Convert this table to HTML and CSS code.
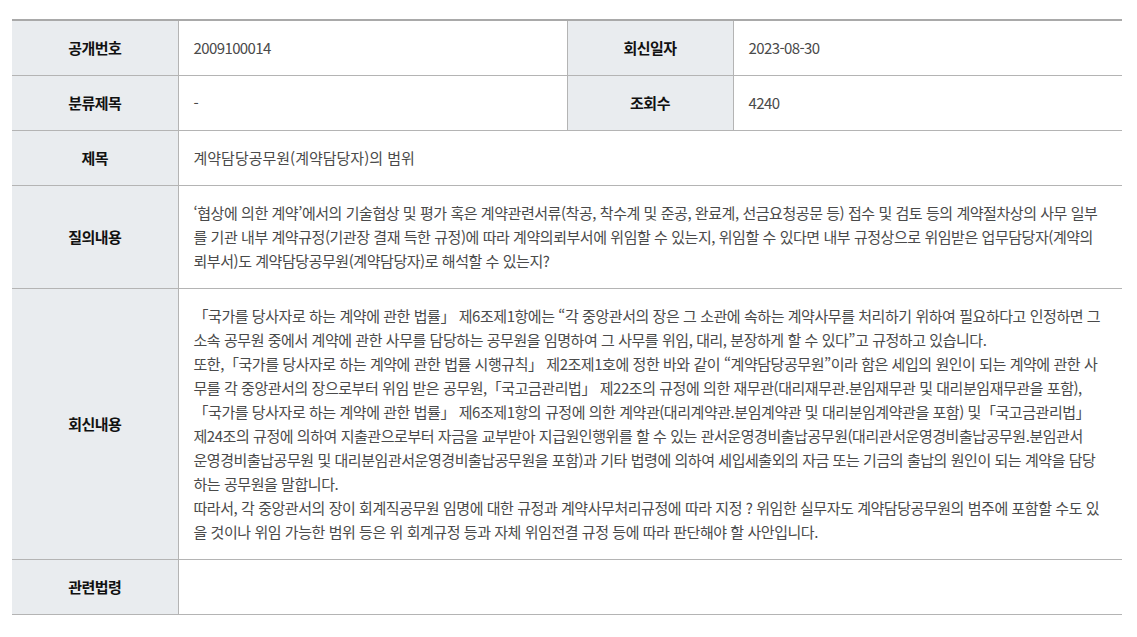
FILE: index.html
```html
<!DOCTYPE html>
<html lang="ko">
<head>
<meta charset="utf-8">
<link rel="stylesheet" href="styles.css">
</head>
<body>
<div class="wrap">
<table class="view">
  <colgroup>
    <col class="c-th"><col class="c-td"><col class="c-th"><col class="c-td">
  </colgroup>
  <tr class="r-short">
    <th>공개번호</th><td class="num">2009100014</td>
    <th>회신일자</th><td class="num">2023-08-30</td>
  </tr>
  <tr class="r-short">
    <th>분류제목</th><td>-</td>
    <th>조회수</th><td class="num">4240</td>
  </tr>
  <tr class="r-short">
    <th>제목</th><td colspan="3">계약담당공무원(계약담당자)의 범위</td>
  </tr>
  <tr>
    <th>질의내용</th>
    <td colspan="3" class="long">‘협상에 의한 계약’에서의 기술협상 및 평가 혹은 계약관련서류(착공, 착수계 및 준공, 완료계, 선금요청공문 등) 접수 및 검토 등의 계약절차상의 사무 일부<br>를 기관 내부 계약규정(기관장 결재 득한 규정)에 따라 계약의뢰부서에 위임할 수 있는지, 위임할 수 있다면 내부 규정상으로 위임받은 업무담당자(계약의<br>뢰부서)도 계약담당공무원(계약담당자)로 해석할 수 있는지?</td>
  </tr>
  <tr>
    <th>회신내용</th>
    <td colspan="3" class="long answer">「국가를 당사자로 하는 계약에 관한 법률」 제6조제1항에는 “각 중앙관서의 장은 그 소관에 속하는 계약사무를 처리하기 위하여 필요하다고 인정하면 그<br>소속 공무원 중에서 계약에 관한 사무를 담당하는 공무원을 임명하여 그 사무를 위임, 대리, 분장하게 할 수 있다”고 규정하고 있습니다.<br>또한,「국가를 당사자로 하는 계약에 관한 법률 시행규칙」 제2조제1호에 정한 바와 같이 “계약담당공무원”이라 함은 세입의 원인이 되는 계약에 관한 사<br>무를 각 중앙관서의 장으로부터 위임 받은 공무원,「국고금관리법」 제22조의 규정에 의한 재무관(대리재무관.분임재무관 및 대리분임재무관을 포함),<br>「국가를 당사자로 하는 계약에 관한 법률」 제6조제1항의 규정에 의한 계약관(대리계약관.분임계약관 및 대리분임계약관을 포함) 및「국고금관리법」<br>제24조의 규정에 의하여 지출관으로부터 자금을 교부받아 지급원인행위를 할 수 있는 관서운영경비출납공무원(대리관서운영경비출납공무원.분임관서<br>운영경비출납공무원 및 대리분임관서운영경비출납공무원을 포함)과 기타 법령에 의하여 세입세출외의 자금 또는 기금의 출납의 원인이 되는 계약을 담당<br>하는 공무원을 말합니다.<br>따라서, 각 중앙관서의 장이 회계직공무원 임명에 대한 규정과 계약사무처리규정에 따라 지정 ? 위임한 실무자도 계약담당공무원의 범주에 포함할 수도 있<br>을 것이나 위임 가능한 범위 등은 위 회계규정 등과 자체 위임전결 규정 등에 따라 판단해야 할 사안입니다.</td>
  </tr>
  <tr class="r-short">
    <th>관련법령</th><td colspan="3"></td>
  </tr>
</table>
</div>
</body>
</html>
```
FILE: styles.css
```css
html, body {
  margin: 0;
  padding: 0;
  background: #fff;
}
body {
  font-family: "Noto Sans CJK KR", "Noto Sans", sans-serif;
}
.wrap {
  padding: 19px 15px 0 12px;
}
.view {
  width: 1110px;
  border-collapse: collapse;
  table-layout: fixed;
  border-top: 2px solid #a9a9a9;
}
.c-th { width: 166px; }
.c-td { width: 389px; }
.view th, .view td {
  border-bottom: 1px solid #b4b4b4;
  border-left: 1px solid #b4b4b4;
}
.view tr > :first-child { border-left: none; }
.view th {
  background: #e9ecef;
  color: #111;
  font-size: 15px;
  font-weight: 700;
  text-align: center;
  letter-spacing: -0.5px;
}
.view td {
  color: #4a4a4a;
  font-size: 15px;
  padding: 0 15px;
  letter-spacing: 0;
  vertical-align: middle;
}
.view td.num {
  letter-spacing: -0.6px;
}
.r-short { height: 55px; }
.view .long {
  line-height: 24px;
  padding: 15px;
  white-space: nowrap;
  letter-spacing: -0.45px;
}
```
